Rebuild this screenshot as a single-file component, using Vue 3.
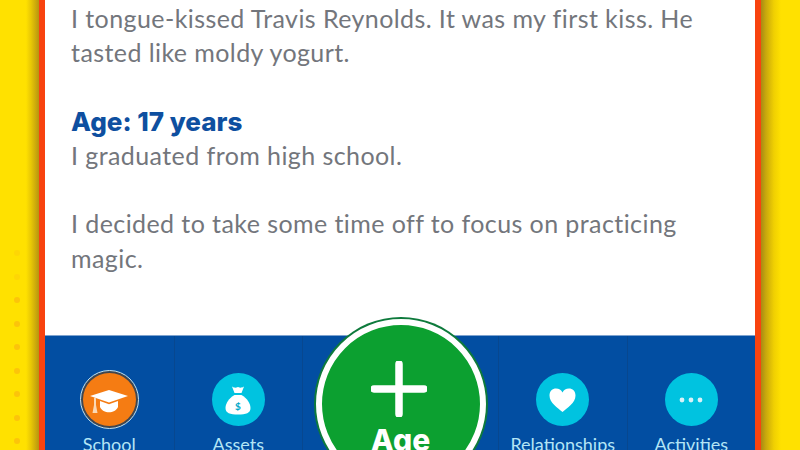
<template>
  <div class="page">
    <div class="gutter left">
      <span v-for="n in 9" :key="n" class="dot" :class="{ faint: n < 3 }"></span>
    </div>

    <div class="frame">
      <div class="log">
        <p>I tongue-kissed Travis Reynolds. It was my first kiss. He<br />tasted like moldy yogurt.</p>
        <h2>Age: 17 years</h2>
        <p>I graduated from high school.</p>
        <p class="gap">I decided to take some time off to focus on practicing<br />magic.</p>
      </div>

      <nav class="tabs">
        <div class="tab">
          <span class="ring">
            <span class="icon orange">
              <svg width="40" height="30" viewBox="0 0 40 30">
                <path d="M20 5 39 11 20 17.500 1 11Z" fill="#fff" />
                <path d="M11 16 20 19.300 29 16V22C26 29 14 29 11 22Z" fill="#fff" />
                <path d="M5 12.500 7 13.200V20L8.500 28H3.500L5 20Z" fill="#fbd9b5" />
              </svg>
            </span>
          </span>
          <span class="label">School</span>
        </div>
        <div class="tab">
          <span class="icon">
            <svg width="26" height="30" viewBox="0 0 26 30">
              <path d="M7 1.500C9.500 3 10.500 3 13 2 15.500 3 16.500 3 19 1.500L16.500 8H9.500Z" fill="#fff" />
              <path d="M9.500 10H16.500C22 13 25.500 18.500 25.500 23 25.500 28 21 29.500 13 29.500 5 29.500.5 28 .5 23 .5 18.500 4 13 9.500 10Z" fill="#fff" />
              <text x="13" y="25" text-anchor="middle" class="money">$</text>
            </svg>
          </span>
          <span class="label">Assets</span>
        </div>

        <div class="age-slot">
          <button class="age">
            <svg class="plus" width="56" height="56" viewBox="0 0 56 56">
              <path d="M28 3V53M3 28H53" stroke="#fff" stroke-width="7.500" stroke-linecap="round" />
            </svg>
            <span>Age</span>
          </button>
        </div>

        <div class="tab">
          <span class="icon">
            <svg width="27" height="24" viewBox="0 0 27 24">
              <path d="M13.500 24C9 20 .5 15 .5 7.500 .5 3 3.500 .5 7 .5 10 .5 12.300 2 13.500 4.500 14.700 2 17 .5 20 .5 23.500 .5 26.500 3 26.500 7.500 26.500 15 18 20 13.500 24Z" fill="#fff" />
            </svg>
          </span>
          <span class="label">Relationships</span>
        </div>
        <div class="tab">
          <span class="icon">
            <svg width="24" height="6" viewBox="0 0 24 6">
              <circle cx="3" cy="3" r="2.400" fill="#d8f3f9" />
              <circle cx="12" cy="3" r="2.400" fill="#d8f3f9" />
              <circle cx="21" cy="3" r="2.400" fill="#d8f3f9" />
            </svg>
          </span>
          <span class="label">Activities</span>
        </div>
      </nav>
    </div>

    <div class="gutter right"></div>
  </div>
</template>

<script setup>
</script>

<style>
html,
body {
  margin: 0;
  overflow: hidden;
}
</style>

<style scoped>
.page {
  display: flex;
  width: 800px;
  height: 450px;
  overflow: hidden;
  background: #ffe100;
  font-family: Lato, "Noto Sans", sans-serif;
}

.gutter.left {
  display: flex;
  flex: none;
  flex-direction: column;
  align-items: flex-start;
  gap: 17.500px;
  width: 39px;
  box-sizing: border-box;
  padding: 250px 0 0 14px;
  background: linear-gradient(90deg, #ffe100 0, #ffe100 26px, #e8c705 31px, #b79410 39px);
}
.gutter.right {
  flex: 1;
  background: linear-gradient(90deg, #a98a14 0, #c9a90c 5px, #f0d002 13px, #ffe100 20px);
}

.dot {
  flex: none;
  width: 6px;
  height: 6px;
  border-radius: 50%;
  background: #fcc40a;
}
.dot.faint {
  background: #fed605;
}

.frame {
  display: flex;
  flex: none;
  flex-direction: column;
  width: 710px;
  height: 450px;
  border-left: 6px solid #f8430f;
  border-right: 6px solid #f8430f;
}

.log {
  height: 335px;
  padding: 1px 0 0 26px;
  background: #fff;
  color: #73767c;
  font-size: 25px;
  line-height: 34.300px;
  letter-spacing: 0.42px;
}
.log p {
  margin: 0;
}
.log .gap {
  margin-top: 34.300px;
}
.log h2 {
  margin: 35px 0 -1px;
  color: #0e4fa0;
  font-family: Inter, Lato, sans-serif;
  font-size: 26px;
  font-weight: 800;
  line-height: 34.300px;
  letter-spacing: 0;
}

.tabs {
  display: grid;
  grid-template-columns: 128.500px 128.500px 1fr 128.500px 128.500px;
  height: 115px;
  background: #024ea2;
  border-top: 1px solid #7ea3cf;
  box-sizing: border-box;
}

.tab {
  display: flex;
  flex-direction: column;
  align-items: center;
  padding-top: 37px;
  border-left: 1px solid #07478f;
}
.tab:first-child {
  border-left: 0;
}

.icon {
  display: flex;
  align-items: center;
  justify-content: center;
  flex: none;
  width: 53px;
  height: 53px;
  border-radius: 50%;
  background: #00c3e0;
}
.icon.orange {
  background: #f57c13;
}

.ring {
  display: flex;
  align-items: center;
  justify-content: center;
  width: 59px;
  height: 59px;
  margin: -3px 0;
  box-sizing: border-box;
  border: 1px solid #bfe3f5;
  border-radius: 50%;
  background: #3f4650;
}

.money {
  fill: #00a8c8;
  font-size: 10px;
  font-weight: 700;
}

.label {
  margin-top: 7px;
  color: #b4e5f6;
  font-size: 18px;
  line-height: 22px;
  white-space: nowrap;
}

.age-slot {
  display: flex;
  justify-content: center;
  border-left: 1px solid #07478f;
}

.age {
  display: flex;
  flex-direction: column;
  align-items: center;
  flex: none;
  width: 170px;
  height: 170px;
  margin-top: -17px;
  padding: 36px 0 0;
  box-sizing: border-box;
  border: 6px solid #fff;
  border-radius: 50%;
  background: #0ca030;
  box-shadow: 0 0 0 2px #0e7a3c;
  outline: 0;
  color: #fff;
  font-family: Inter, Lato, sans-serif;
  font-size: 30px;
  font-weight: 800;
  line-height: 36px;
}
.plus {
  flex: none;
  margin-bottom: 5px;
  margin-left: -4px;
}
</style>
